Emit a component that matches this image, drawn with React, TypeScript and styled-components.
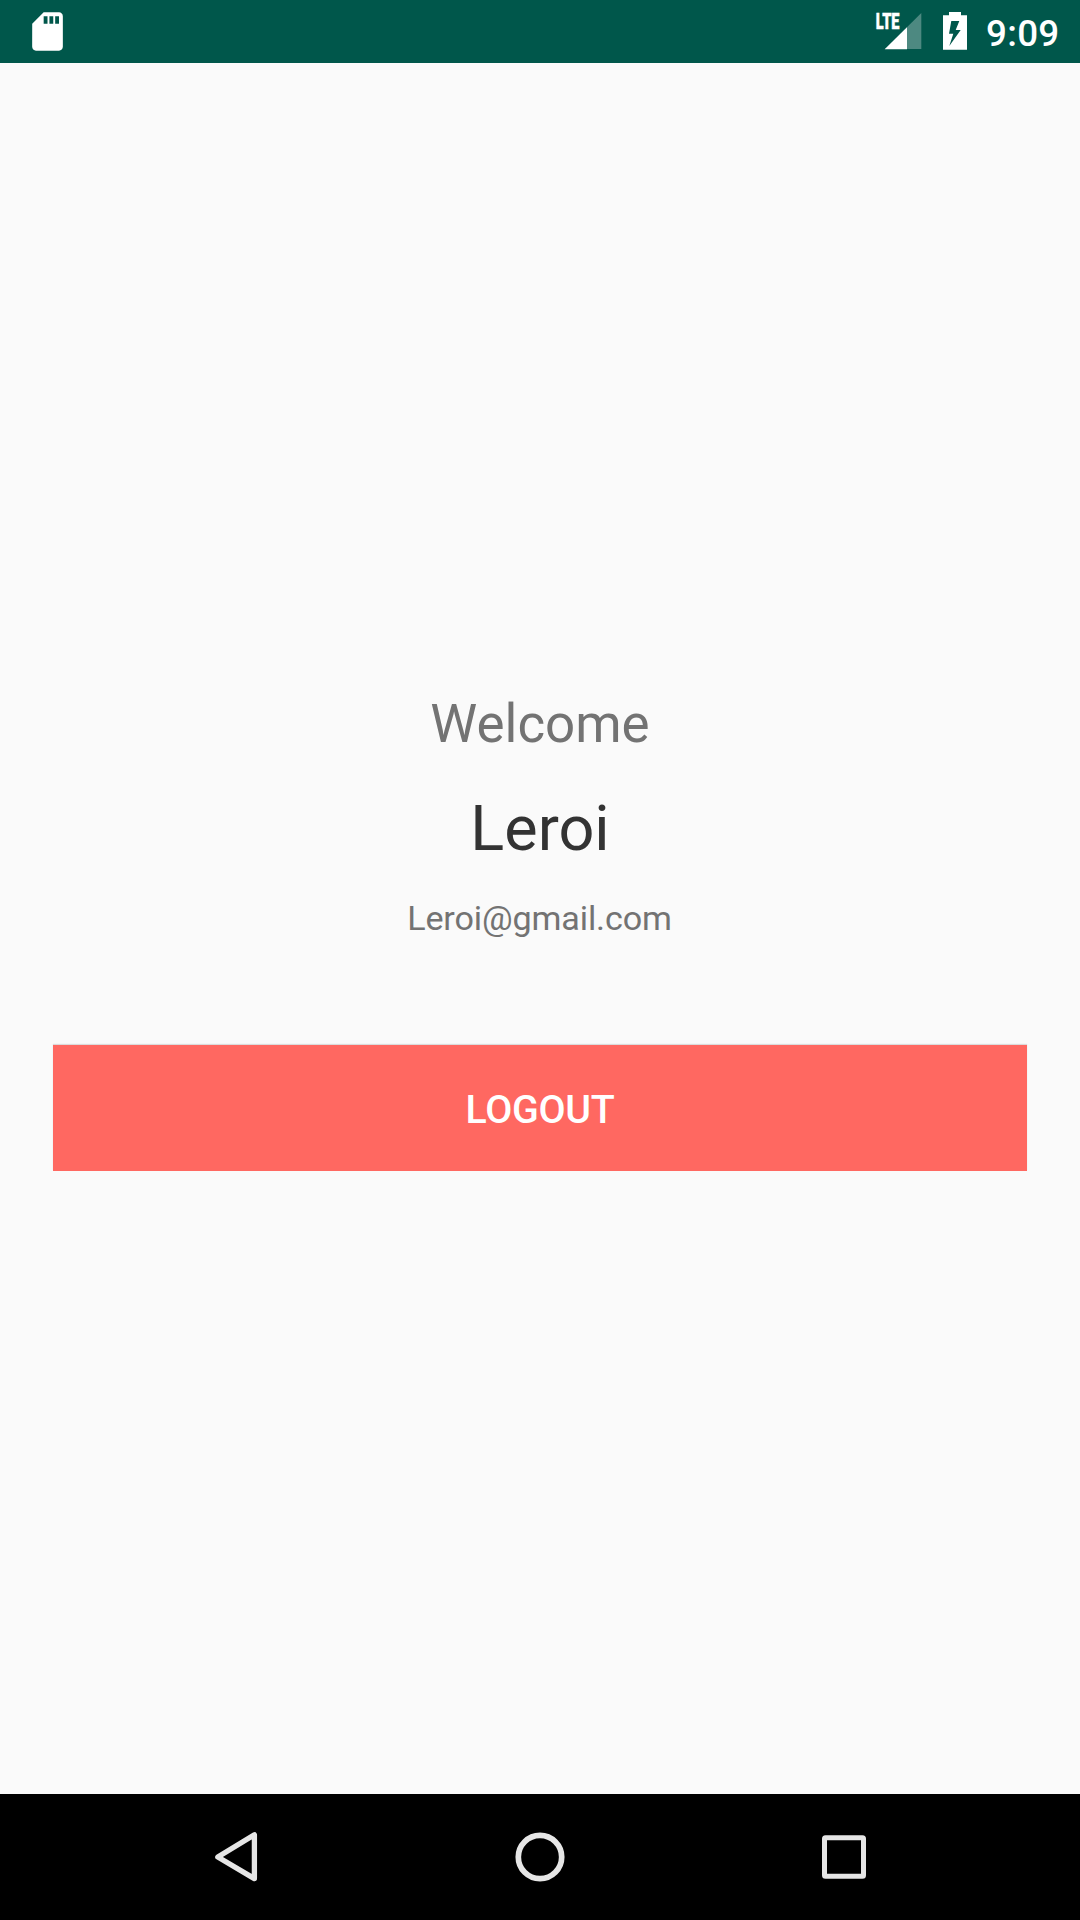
import React from "react";
import styled, { createGlobalStyle } from "styled-components";

const GlobalStyle = createGlobalStyle`
  html, body { margin: 0; padding: 0; background: #fafafa; }
  * { box-sizing: border-box; }
`;

const Screen = styled.div`
  width: 1080px;
  height: 1920px;
  display: flex;
  flex-direction: column;
  background: #fafafa;
  font-family: Roboto, "Liberation Sans", sans-serif;
  overflow: hidden;
`;

const StatusBar = styled.header`
  height: 63px;
  flex: none;
  display: flex;
  align-items: center;
  justify-content: space-between;
  padding: 0 21px 0 24px;
  background: #00574b;
  color: #fff;
`;

const StatusGroup = styled.div`
  height: 63px;
  display: flex;
  align-items: center;
`;

const Glyph = styled.svg<{ $gap?: number }>`
  display: block;
  flex: none;
  margin-right: ${({ $gap = 0 }) => $gap}px;
`;

const Clock = styled.time`
  width: 73px;
  font-size: 36.75px;
  font-weight: 500;
  line-height: 43px;
  letter-spacing: 0.3px;
  padding-top: 4px;
  white-space: nowrap;
`;

const Content = styled.main`
  flex: 1;
  display: flex;
  flex-direction: column;
  align-items: center;
  padding: 630px 53px 0;
`;

const Line = styled.p<{ $size: number; $height: number; $gap: number; $color: string; $track?: number }>`
  margin: 0 0 ${({ $gap }) => $gap}px;
  font-size: ${({ $size }) => $size}px;
  line-height: ${({ $height }) => $height}px;
  letter-spacing: ${({ $track = 0 }) => $track}px;
  color: ${({ $color }) => $color};
`;

const Email = styled(Line)`
  padding-right: 1px;
`;

const LogoutButton = styled.button`
  width: 974px;
  height: 126px;
  flex: none;
  border: 0;
  border-radius: 0;
  padding: 3px 0 0;
  background: #ff6861;
  box-shadow: 0 -1px 1px rgba(0, 0, 0, 0.12);
  color: #fff;
  font-family: inherit;
  font-size: 39.375px;
  font-weight: 500;
  line-height: 46px;
  letter-spacing: -0.3px;
`;

const NavBar = styled.nav`
  height: 126px;
  flex: none;
  display: flex;
  align-items: center;
  justify-content: center;
  gap: 204px;
  background: #000;
`;

const NavButton = styled.button`
  width: 100px;
  height: 126px;
  border: 0;
  padding: 0;
  background: transparent;
`;

export default function App() {
  return (
    <Screen>
      <GlobalStyle />
      <StatusBar>
        <StatusGroup>
          <Glyph width="48" height="63" viewBox="24 0 48 63" fill="#fff">
            <path
              transform="translate(24.5 8.5) scale(1.917)"
              d="M18 2h-8L4.02 8 4 20c0 1.1.9 2 2 2h12c1.1 0 2-.9 2-2V4c0-1.1-.9-2-2-2zm-6 6h-2V4h2v4zm3 0h-2V4h2v4zm3 0h-2V4h2v4z"
            />
          </Glyph>
        </StatusGroup>
        <StatusGroup>
          <Glyph width="48" height="63" viewBox="875 0 48 63" $gap={20}>
            <path d="M921.3 13V49H885z" fill="#fff" fillOpacity=".3" />
            <path d="M907 27.2V49.3H884.7z" fill="#fff" />
            <text
              transform="translate(875.8 29) scale(.66 1)"
              fontFamily="Roboto, sans-serif"
              fontSize="22"
              fontWeight="900"
              fill="#fff"
              stroke="#fff"
              strokeWidth=".5"
            >
              LTE
            </text>
          </Glyph>
          <Glyph width="24" height="63" viewBox="943 0 24 63" $gap={19}>
            <path
              d="M949 12h12v3.3h6V49.7H943V15.3h6zM951.3 21L949 33.8h4.3L949.3 46L960.7 30H955.7L959.3 21z"
              fill="#fff"
              fillRule="evenodd"
            />
          </Glyph>
          <Clock>9:09</Clock>
        </StatusGroup>
      </StatusBar>
      <Content>
        <Line $size={52.9} $height={62} $gap={37} $color="#737373">Welcome</Line>
        <Line $size={63} $height={74} $gap={32} $color="#333333">Leroi</Line>
        <Email $size={34.125} $height={40} $gap={107} $color="#737373" $track={-0.12}>Leroi@gmail.com</Email>
        <LogoutButton>LOGOUT</LogoutButton>
      </Content>
      <NavBar>
        <NavButton aria-label="Back">
          <Glyph width="100" height="126" viewBox="186 1794 100 126">
            <path d="M254.4 1834.8V1878.6L217.8 1857z" fill="none" stroke="#e6e6e6" strokeWidth="5.3" strokeLinejoin="round" />
          </Glyph>
        </NavButton>
        <NavButton aria-label="Home">
          <Glyph width="100" height="126" viewBox="490 1794 100 126">
            <circle cx="540" cy="1857" r="21.7" fill="none" stroke="#e6e6e6" strokeWidth="5.7" />
          </Glyph>
        </NavButton>
        <NavButton aria-label="Recent apps">
          <Glyph width="100" height="126" viewBox="794 1794 100 126">
            <path
              d="M825.5 1835.2h37a3.5 3.5 0 0 1 3.5 3.5v36.6a3.5 3.5 0 0 1-3.5 3.5h-37a3.5 3.5 0 0 1-3.5-3.5v-36.6a3.5 3.5 0 0 1 3.5-3.5zM827 1840.3v33.5h34v-33.5z"
              fill="#e6e6e6"
              fillRule="evenodd"
            />
          </Glyph>
        </NavButton>
      </NavBar>
    </Screen>
  );
}
